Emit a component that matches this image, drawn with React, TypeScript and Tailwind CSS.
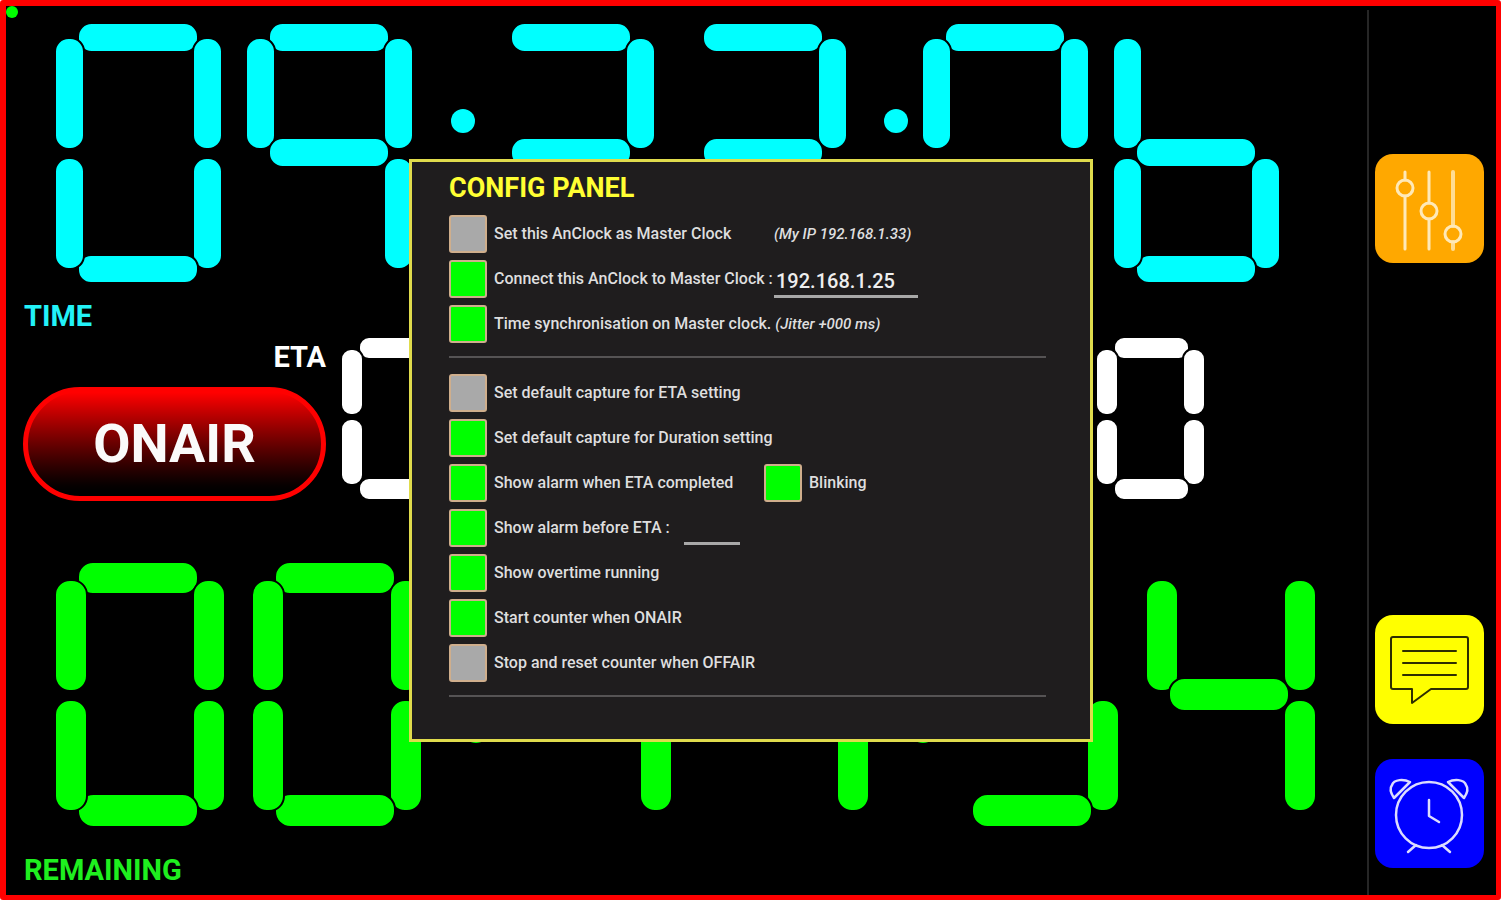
import { useState, type ReactNode } from "react";

type Box = { x: number; y: number; w: number; h: number };

type Face = {
  width: number;
  height: number;
  segments: Record<string, Box>;
  dots: { cx: number; ys: number[]; r: number };
};

// a = top, b/c = right, d = bottom, e/f = left, g = middle
const LIT: Record<string, string> = {
  "0": "abcdef",
  "1": "bc",
  "3": "abcdg",
  "4": "bcfg",
  "5": "acdfg",
  "6": "cdefg",
  "9": "abcfg",
};

const timeFace: Face = {
  width: 165,
  height: 258,
  segments: {
    a: { x: 23, y: 0, w: 118, h: 27 },
    b: { x: 138, y: 15, w: 27, h: 109 },
    c: { x: 138, y: 135, w: 27, h: 109 },
    d: { x: 23, y: 232, w: 118, h: 26 },
    e: { x: 0, y: 135, w: 27, h: 109 },
    f: { x: 0, y: 15, w: 27, h: 109 },
    g: { x: 23, y: 115, w: 118, h: 27 },
  },
  dots: { cx: 24, ys: [97, 161], r: 12 },
};

const etaFace: Face = {
  width: 107,
  height: 161,
  segments: {
    a: { x: 18, y: 0, w: 73, h: 20 },
    b: { x: 87, y: 12, w: 20, h: 64 },
    c: { x: 87, y: 82, w: 20, h: 64 },
    d: { x: 18, y: 141, w: 73, h: 20 },
    e: { x: 0, y: 82, w: 20, h: 64 },
    f: { x: 0, y: 12, w: 20, h: 64 },
    g: { x: 18, y: 70, w: 73, h: 20 },
  },
  dots: { cx: 12, ys: [60, 100], r: 8 },
};

const remainingFace: Face = {
  width: 168,
  height: 263,
  segments: {
    a: { x: 23, y: 0, w: 118, h: 30 },
    b: { x: 138, y: 18, w: 30, h: 109 },
    c: { x: 138, y: 138, w: 30, h: 109 },
    d: { x: 23, y: 232, w: 118, h: 31 },
    e: { x: 0, y: 138, w: 30, h: 109 },
    f: { x: 0, y: 18, w: 30, h: 109 },
    g: { x: 23, y: 116, w: 118, h: 31 },
  },
  dots: { cx: 26, ys: [100, 168], r: 12 },
};

function SegmentDisplay({
  value,
  face,
  label,
  className,
}: {
  value: string;
  face: Face;
  label: string;
  className: string;
}) {
  return (
    <div role="img" aria-label={`${label} ${value}`} className={`flex items-start justify-between ${className}`}>
      {value.split("").map((char, i) =>
        char === ":" ? (
          <svg key={i} width={24} height={face.height} fill="currentColor" className="shrink-0 overflow-visible">
            {face.dots.ys.map((y) => (
              <circle key={y} cx={face.dots.cx} cy={y} r={face.dots.r} />
            ))}
          </svg>
        ) : (
          <svg
            key={i}
            width={face.width}
            height={face.height}
            fill="currentColor"
            stroke="black"
            strokeWidth={2}
            className="shrink-0 overflow-visible"
          >
            {/* black outline sits just outside each segment so neighbours stay separated */}
            {LIT[char].split("").map((id) => {
              const s = face.segments[id];
              return (
                <rect
                  key={id}
                  x={s.x - 1}
                  y={s.y - 1}
                  width={s.w + 2}
                  height={s.h + 2}
                  rx={Math.min(s.w, s.h) / 2}
                />
              );
            })}
          </svg>
        )
      )}
    </div>
  );
}

function SideButton({ label, className, children }: { label: string; className: string; children: ReactNode }) {
  return (
    <button type="button" aria-label={label} className={`size-[109px] shrink-0 rounded-[18px] ${className}`}>
      <svg
        viewBox="0 0 109 109"
        className="size-full"
        fill="none"
        stroke="currentColor"
        strokeLinecap="round"
        strokeLinejoin="round"
      >
        {children}
      </svg>
    </button>
  );
}

function Option({
  id,
  text,
  on = false,
  textClass = "",
  children,
}: {
  id: string;
  text: ReactNode;
  on?: boolean;
  textClass?: string;
  children?: ReactNode;
}) {
  const [checked, setChecked] = useState(on);
  return (
    <div className="flex h-[38px] items-center">
      <input
        id={id}
        type="checkbox"
        checked={checked}
        onChange={(e) => setChecked(e.target.checked)}
        className="size-[38px] shrink-0 appearance-none rounded-[3px] border-2 border-[#cfae8c] bg-[#a9a9a9] checked:bg-[#00ff00]"
      />
      <label htmlFor={id} className={`ml-[7px] whitespace-nowrap ${textClass}`}>
        {text}
      </label>
      {children}
    </div>
  );
}

function ConfigPanel() {
  const [masterIp, setMasterIp] = useState("192.168.1.25");
  const [beforeEta, setBeforeEta] = useState("");

  return (
    <section
      role="dialog"
      aria-labelledby="config-title"
      className="w-[684px] max-w-full border-3 border-[#dfdb4c] bg-[#1f1d1e] pt-2 pr-11 pb-[42px] pl-[37px] text-[16px] leading-5 font-medium text-[#dedede]"
    >
      <h2 id="config-title" className="mb-[9px] text-[27px] leading-9 font-bold text-[#ffff33]">
        CONFIG PANEL
      </h2>

      <div className="flex flex-col gap-[7px]">
        <Option id="master" text="Set this AnClock as Master Clock" textClass="min-w-[280px]">
          <span className="text-[15px] italic">(My IP 192.168.1.33)</span>
        </Option>
        <Option id="connect" text="Connect this AnClock to Master Clock :" textClass="min-w-[280px]" on>
          <input
            type="text"
            aria-label="Master clock IP"
            value={masterIp}
            onChange={(e) => setMasterIp(e.target.value)}
            className="h-[38px] w-36 border-b-3 border-[#a8a8a8] bg-transparent px-0.5 pt-1.5 text-[20px] font-medium text-[#eeeeee] outline-none"
          />
        </Option>
        <Option
          id="sync"
          text={
            <>
              Time synchronisation on Master clock. <span className="text-[15px] italic">(Jitter +000 ms)</span>
            </>
          }
          on
        />
      </div>

      <hr className="mt-[13px] mb-4 border-t-2 border-[#555354]" />

      <div className="flex flex-col gap-[7px]">
        <Option id="capture-eta" text="Set default capture for ETA setting" />
        <Option id="capture-duration" text="Set default capture for Duration setting" on />
        <Option id="alarm-completed" text="Show alarm when ETA completed" textClass="min-w-[270px]" on>
          <Option id="blinking" text="Blinking" on />
        </Option>
        <Option id="alarm-before" text="Show alarm before ETA :" textClass="min-w-[190px]" on>
          <input
            type="text"
            aria-label="Alarm before ETA"
            value={beforeEta}
            onChange={(e) => setBeforeEta(e.target.value)}
            className="h-9 w-14 self-start border-b-3 border-[#a8a8a8] bg-transparent px-0.5 text-[20px] font-medium text-[#eeeeee] outline-none"
          />
        </Option>
        <Option id="overtime" text="Show overtime running" on />
        <Option id="start-onair" text="Start counter when ONAIR" on />
        <Option id="stop-offair" text="Stop and reset counter when OFFAIR" />
      </div>

      <hr className="mt-[13px] border-t-2 border-[#555354]" />
    </section>
  );
}

export default function App() {
  return (
    <div className="relative flex min-h-screen overflow-hidden rounded-[3px] border-6 border-r-5 border-b-5 border-[#ff0000] bg-black font-['Roboto',sans-serif] font-bold">
      <span className="absolute top-0 left-0 size-3 rounded-full bg-[#00ff00]" />

      <main className="flex min-w-0 flex-1 flex-col pt-[18px] pb-[7px]">
        <SegmentDisplay
          value="09:33:06"
          face={timeFace}
          label="Time"
          className="pr-[88px] pl-[50px] text-[#00ffff]"
        />
        <h1 className="mt-4 pl-[18px] text-[29px] leading-9 text-[#22f2f8]">TIME</h1>

        <div className="mt-1 flex items-start gap-4 pl-[17px]">
          <div className="flex w-[303px] shrink-0 flex-col">
            <h2 className="mt-px self-end text-[29px] leading-9 text-white">ETA</h2>
            <button
              type="button"
              className="mt-3 h-[114px] rounded-full border-5 border-[#ff0000] bg-linear-to-b from-[#ff0000] from-5% to-black to-98% bg-origin-border text-[54px] leading-none text-[#fafafa]"
            >
              ONAIR
            </button>
          </div>
          <SegmentDisplay value="00:00:00" face={etaFace} label="ETA" className="flex-1 pr-[163px] text-white" />
        </div>

        <div className="mt-auto">
          <SegmentDisplay
            value="00:11:54"
            face={remainingFace}
            label="Remaining"
            className="pr-[52px] pl-[50px] text-[#00ff00]"
          />
          <h2 className="mt-[26px] pl-[18px] text-[29px] leading-9 text-[#1fef1f]">REMAINING</h2>
        </div>
      </main>

      <nav
        aria-label="Tools"
        className="mt-1 flex w-[129px] shrink-0 flex-col items-center border-l-2 border-[#262626] pt-36 pr-[6px] pb-[27px]"
      >
        <SideButton label="Settings" className="bg-[#ffa800] text-[#ffe9b8]">
          <g strokeWidth="3">
            <path d="M30 18v8M30 42v53M54 18v31M54 65v30" />
            <path d="M78 18v54M78 88v7" strokeWidth="4" strokeOpacity="0.8" />
            <circle cx="30" cy="34" r="8" />
            <circle cx="54" cy="57" r="8" />
            <circle cx="78" cy="80" r="8" />
          </g>
        </SideButton>
        <SideButton label="Messages" className="mt-auto bg-[#ffff00] text-[#2e2e00]">
          <g strokeWidth="2">
            <path d="M37 74H18a2 2 0 0 1-2-2V24a2 2 0 0 1 2-2h73a2 2 0 0 1 2 2v48a2 2 0 0 1-2 2H56L37 88z" />
            <path d="M28 36h53M28 48h53M28 60h53" />
          </g>
        </SideButton>
        <SideButton label="Alarm" className="mt-[35px] bg-[#0000ff] text-[#dcdcff]">
          <g strokeWidth="2.5">
            <circle cx="54" cy="56" r="33" />
            <path d="M54 41v16l10 6M41 86l-8 7M67 86l8 7" />
            <path d="M35 23C29 20 19 20 17 26C14 30 17 36 19 39Z" />
            <path d="M73 23C79 20 89 20 91 26C94 30 91 36 89 39Z" />
          </g>
        </SideButton>
      </nav>

      <div className="absolute inset-0 flex items-center justify-center">
        <ConfigPanel />
      </div>
    </div>
  );
}
